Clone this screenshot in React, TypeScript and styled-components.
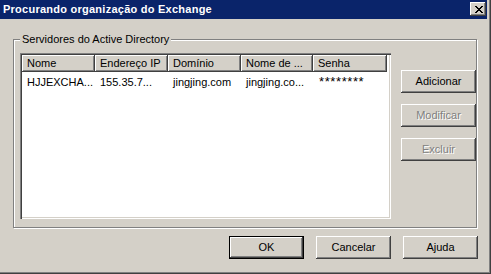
import React from "react";
import styled, { createGlobalStyle, css } from "styled-components";

const Global = createGlobalStyle`
  html, body { margin: 0; padding: 0; background: #d4d0c8; }
  body { font-family: "Liberation Sans", Arial, sans-serif; font-size: 11px; color: #000; }
  * { box-sizing: border-box; }
`;

const Window = styled.div`
  width: 491px;
  height: 274px;
  background: #d4d0c8;
  padding: 0 4px 4px 0;
  box-shadow: inset -1px -1px #404040, inset -2px -2px #808080;
  display: flex;
  flex-direction: column;
`;

const TitleBar = styled.div`
  height: 19px;
  background: #0a246a;
  display: flex;
  align-items: center;
  justify-content: space-between;
  padding: 0 1px 1px 3px;
`;

const TitleText = styled.span`
  color: #fff;
  font-weight: bold;
  font-size: 11px;
  letter-spacing: 0.25px;
`;

const CaptionButton = styled.div`
  width: 16px;
  height: 14px;
  background: #d4d0c8;
  box-shadow: inset -1px -1px #404040, inset 1px 1px #fff, inset -2px -2px #808080;
  display: flex;
  align-items: center;
  justify-content: center;
  padding-left: 1px;
`;

const Content = styled.div`
  padding: 20px 0 0 13px;
  display: flex;
  flex-direction: column;
`;

const Group = styled.div`
  position: relative;
  width: 464px;
  height: 189px;
  border: 1px solid #808080;
  box-shadow: inset 1px 1px #fff, 1px 1px #fff;
  padding: 13px 0 0 6px;
  display: flex;
  gap: 10px;
`;

const Legend = styled.span`
  position: absolute;
  left: 6px;
  top: -8px;
  padding: 0 2px;
  background: #d4d0c8;
  line-height: 14px;
`;

const ListView = styled.div`
  width: 371px;
  height: 166px;
  background: #fff;
  box-shadow: inset 1px 1px #808080, inset 2px 2px #404040, inset -1px -1px #fff, inset -2px -2px #d4d0c8;
  padding: 2px;
  display: flex;
  flex-direction: column;
`;

const HeaderRow = styled.div`
  display: flex;
  height: 17px;
`;

const HeaderCell = styled.div<{ $w: number }>`
  width: ${(p) => p.$w}px;
  height: 17px;
  background: #d4d0c8;
  box-shadow: inset -1px -1px #404040, inset 1px 1px #fff, inset -2px -2px #808080;
  padding: 0 0 1px 5px;
  display: flex;
  align-items: center;
  white-space: nowrap;
  overflow: hidden;
`;

const Row = styled.div`
  display: flex;
  height: 17px;
  margin-top: 1px;
`;

const Cell = styled.div<{ $w: number; $mask?: boolean }>`
  width: ${(p) => p.$w}px;
  padding-left: 5px;
  display: flex;
  align-items: center;
  white-space: nowrap;
  overflow: hidden;
  ${(p) =>
    p.$mask &&
    css`
      font-size: 13px;
      letter-spacing: 0.6px;
      align-items: flex-start;
      padding-top: 1px;
      padding-left: 6px;
    `}
`;

const SideButtons = styled.div`
  margin-top: 17px;
  display: flex;
  flex-direction: column;
  gap: 11px;
`;

const Button = styled.button<{ $default?: boolean }>`
  width: 75px;
  height: 23px;
  background: #d4d0c8;
  border: none;
  padding: 0 0 1px 0;
  font-family: "Liberation Sans", Arial, sans-serif;
  font-size: 11px;
  color: #000;
  box-shadow: inset -1px -1px #404040, inset 1px 1px #fff, inset -2px -2px #808080;
  ${(p) =>
    p.$default &&
    css`
      box-shadow: inset 0 0 0 1px #000, inset -2px -2px #404040, inset 2px 2px #fff,
        inset -3px -3px #808080;
    `}
  &:disabled {
    color: #808080;
    text-shadow: 1px 1px #fff;
  }
`;

const BottomRow = styled.div`
  width: 465px;
  margin-top: 8px;
  display: flex;
  justify-content: flex-end;
  gap: 12px;
`;

const cols = [
  { name: "Nome", w: 73 },
  { name: "Endereço IP", w: 73 },
  { name: "Domínio", w: 73 },
  { name: "Nome de ...", w: 72 },
  { name: "Senha", w: 74 },
];

const row = ["HJJEXCHA...", "155.35.7...", "jingjing.com", "jingjing.co...", "********"];

export default function App() {
  return (
    <>
      <Global />
      <Window>
        <TitleBar>
          <TitleText>Procurando organização do Exchange</TitleText>
          <CaptionButton>
            <svg width="8" height="7" viewBox="0 0 8 7" shapeRendering="crispEdges">
              <path
                d="M0 0h2v1h-2zM6 0h2v1h-2zM1 1h2v1h-2zM5 1h2v1h-2zM2 2h4v1h-4zM3 3h2v1h-2zM2 4h4v1h-4zM1 5h2v1h-2zM5 5h2v1h-2zM0 6h2v1h-2zM6 6h2v1h-2z"
                fill="#000"
              />
            </svg>
          </CaptionButton>
        </TitleBar>
        <Content>
          <Group>
            <Legend>Servidores do Active Directory</Legend>
            <ListView>
              <HeaderRow>
                {cols.map((c) => (
                  <HeaderCell key={c.name} $w={c.w}>
                    {c.name}
                  </HeaderCell>
                ))}
              </HeaderRow>
              <Row>
                {row.map((v, i) => (
                  <Cell key={i} $w={cols[i].w} $mask={i === 4}>
                    {v}
                  </Cell>
                ))}
              </Row>
            </ListView>
            <SideButtons>
              <Button>Adicionar</Button>
              <Button disabled>Modificar</Button>
              <Button disabled>Excluir</Button>
            </SideButtons>
          </Group>
          <BottomRow>
            <Button $default>OK</Button>
            <Button>Cancelar</Button>
            <Button>Ajuda</Button>
          </BottomRow>
        </Content>
      </Window>
    </>
  );
}
